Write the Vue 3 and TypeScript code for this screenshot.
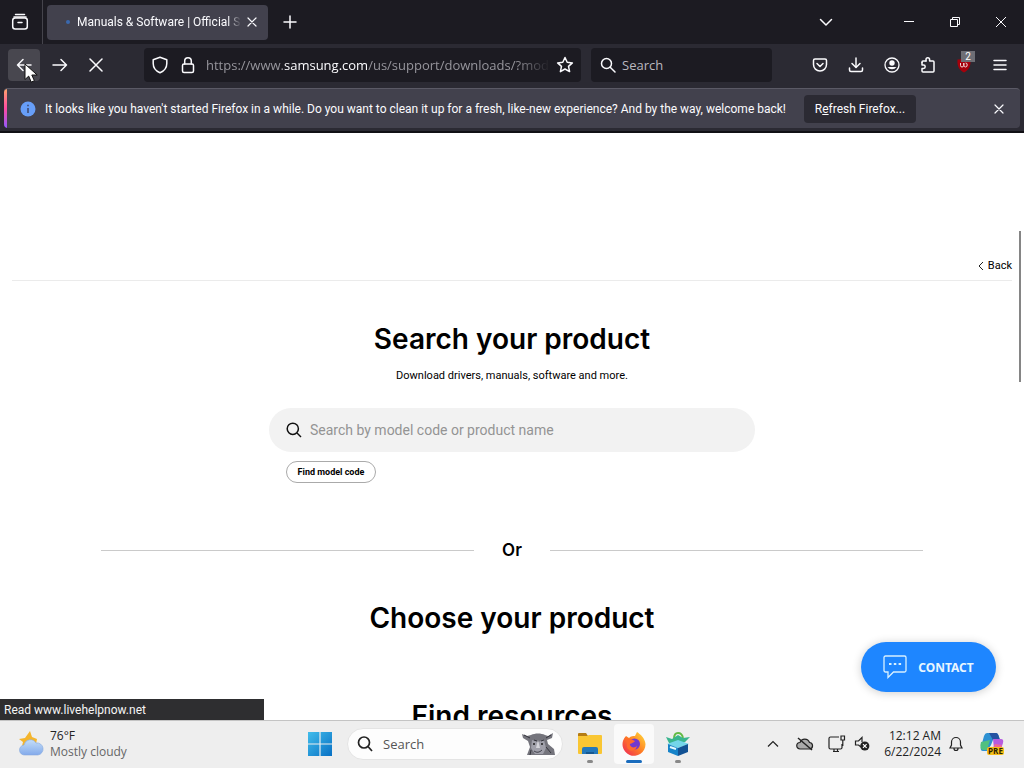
<script setup lang="ts">
import { ref } from 'vue'

const address = ref('')
const product = ref('')
const toolbarIcons: { label: string; paths: string[] }[] = [
  { label: 'Save to Pocket', paths: ['M3 2h10A1.500 1.500 0 0 1 14.500 3.500V7.500a6.500 6.500 0 0 1-13 0V3.500A1.500 1.500 0 0 1 3 2z', 'M5 6.500l3 3 3-3'] },
  { label: 'Downloads', paths: ['M8 1v9', 'M4 6.500L8 10.500l4-4', 'M1.500 11v2A1.500 1.500 0 0 0 3 14.500h10a1.500 1.500 0 0 0 1.500-1.500v-2'] },
]
</script>

<template>
  <div class="desktop">
    <section class="browser">
      <header class="tabs">
        <button class="view" aria-label="Firefox View">
          <svg width="18" height="18" viewBox="0 0 18 18" class="line"><path d="M4.500 1.500h9M3 4h12" /><rect x="1.700" y="5" width="14.600" height="11" rx="2.500" /><path d="M7 9.500h4" /></svg>
        </button>
        <div class="tab">
          <i class="spinner"></i>
          <span class="title">Manuals &amp; Software | Official S</span>
          <button aria-label="Close tab" class="bare">
            <svg width="10" height="10" viewBox="0 0 10 10" class="line thin"><path d="M1 1l8 8M9 1L1 9" /></svg>
          </button>
        </div>
        <button class="bare newtab" aria-label="New tab">
          <svg width="14" height="14" viewBox="0 0 14 14" class="line"><path d="M7 1v12M1 7h12" /></svg>
        </button>
        <span class="grow"></span>
        <button class="bare alltabs" aria-label="List all tabs">
          <svg width="14" height="14" viewBox="0 0 14 14" class="line"><path d="M1.500 4.500L7 10l5.500-5.500" /></svg>
        </button>
        <button class="bare win" aria-label="Minimize"><svg width="12" height="12" viewBox="0 0 12 12" class="line one"><path d="M1 5.500h10" /></svg></button>
        <button class="bare win" aria-label="Restore"><svg width="12" height="12" viewBox="0 0 12 12" class="line one"><path d="M1.500 3.500h7v7h-7zM3.500 3.500v-2h7v7h-2" /></svg></button>
        <button class="bare win" aria-label="Close"><svg width="12" height="12" viewBox="0 0 12 12" class="line one"><path d="M1 1l10 10M11 1L1 11" /></svg></button>
      </header>

      <nav class="toolbar">
        <button class="nav back" aria-label="Back">
          <svg width="16" height="16" viewBox="0 0 16 16" class="line"><path d="M15 8H1.500M7 2.500L1.500 8 7 13.500" /></svg>
          <svg class="cursor" width="15" height="21" viewBox="0 0 15 21"><path d="M1 1v15.500l3.700-3.400 2.500 6 3.200-1.400-2.600-5.700h5.400z" fill="#fff" stroke="#111" /></svg>
        </button>
        <button class="nav" aria-label="Forward"><svg width="16" height="16" viewBox="0 0 16 16" class="line"><path d="M1 8h13.500M9 2.500L14.500 8 9 13.500" /></svg></button>
        <button class="nav" aria-label="Stop"><svg width="14" height="14" viewBox="0 0 14 14" class="line"><path d="M1 1l12 12M13 1L1 13" /></svg></button>
        <div class="url">
          <svg width="16" height="18" viewBox="0 0 16 18" class="line"><path d="M8 1.200l6.800 2.500v3.800c0 4-2.600 7.500-6.800 9.200C3.800 15 1.200 11.500 1.200 7.500V3.700z" /></svg>
          <svg width="14" height="18" viewBox="0 0 14 18" class="line lock"><rect x="1.500" y="8" width="11" height="8.500" rx="1.500" /><path d="M3.700 8V5a3.300 3.300 0 0 1 6.600 0v3" /></svg>
          <a class="address" href="#">https://www.<b>samsung.com</b>/us/support/downloads/?mod</a>
          <button class="bare" aria-label="Bookmark this page"><svg width="18" height="18" viewBox="0 0 18 18" class="line"><path d="M9 1.500l2.200 4.800 5.200.6-3.900 3.500 1.100 5.200L9 13l-4.600 2.600 1.100-5.200L1.600 6.900l5.200-.6z" /></svg></button>
        </div>
        <label class="find">
          <svg width="16" height="16" viewBox="0 0 16 16" class="line"><circle cx="6.500" cy="6.500" r="5" /><path d="M10.200 10.200L15 15" /></svg>
          <input v-model="address" placeholder="Search" aria-label="Search the web" />
        </label>
        <div class="tools">
          <button v-for="t in toolbarIcons" :key="t.label" class="bare" :aria-label="t.label">
            <svg width="16" height="16" viewBox="0 0 16 16" class="line"><path v-for="p in t.paths" :key="p" :d="p" /></svg>
          </button>
          <button class="bare" aria-label="Account">
            <svg width="16" height="16" viewBox="0 0 16 16"><circle cx="8" cy="8" r="7" fill="none" stroke="#fbfbfe" stroke-width="1.300" /><circle cx="8" cy="6" r="2.700" fill="#fbfbfe" /><path d="M3.500 10h9a5.500 5.500 0 0 1-9 0z" fill="#fbfbfe" /></svg>
          </button>
          <button class="bare" aria-label="Extensions">
            <svg width="16" height="18" viewBox="0 0 16 18" class="line"><path d="M6 5V3.500a1.800 1.800 0 0 1 3.600 0V5H13a1 1 0 0 1 1 1v9a1 1 0 0 1-1 1H3a1 1 0 0 1-1-1v-2.500h1.500a1.700 1.700 0 0 0 0-3.400H2V6.500" /><path d="M2 6.500V6a1 1 0 0 1 1-1h3" /></svg>
          </button>
          <button class="bare ublock" aria-label="uBlock Origin">
            <svg width="16" height="16" viewBox="0 0 16 16"><path d="M8 .5C6 2 4 2.500 1.500 2.500 1 9 3 13 8 15.500 13 13 15 9 14.500 2.500 12 2.500 10 2 8 .5z" fill="#a5000b" /><path d="M4.500 6v2.500q0 1.500 1.500 1.500t1.800-1.500V6v2.500q.3 1.500 1.800 1.500t1.600-2-1.600-2" fill="none" stroke="#f3dada" /></svg>
            <span class="count">2</span>
          </button>
          <button class="bare" aria-label="Menu"><svg width="14" height="12" viewBox="0 0 14 12" class="line"><path d="M1 1.500h12M1 6h12M1 10.500h12" /></svg></button>
        </div>
      </nav>

      <div class="notice">
        <div class="bar">
          <svg width="16" height="16" viewBox="0 0 16 16"><circle cx="8" cy="8" r="7.500" fill="#679ef8" /><path d="M8 7v5M8 3.800v1.500" stroke="#3c456a" stroke-width="1.500" /></svg>
          <span class="message">It looks like you haven't started Firefox in a while. Do you want to clean it up for a fresh, like-new experience? And by the way, welcome back!</span>
          <button class="refresh">R<u>e</u>fresh Firefox...</button>
          <span class="grow"></span>
          <button class="bare" aria-label="Dismiss"><svg width="10" height="10" viewBox="0 0 10 10" class="line thin"><path d="M1 1l8 8M9 1L1 9" /></svg></button>
        </div>
      </div>

      <main class="page">
        <div class="crumb">
          <a href="#"><svg width="6" height="10" viewBox="0 0 6 10" fill="none" stroke="#222"><path d="M5 1L1 5l4 4" /></svg>Back</a>
        </div>
        <h1>Search your product</h1>
        <p class="sub">Download drivers, manuals, software and more.</p>
        <div class="search">
          <label class="field">
            <svg width="16" height="16" viewBox="0 0 16 16" fill="none" stroke="#111" stroke-width="1.500"><circle cx="6.800" cy="6.800" r="5.600" /><path d="M11 11l4 4" /></svg>
            <input v-model="product" placeholder="Search by model code or product name" aria-label="Model code or product name" />
          </label>
          <button class="pill">Find model code</button>
        </div>
        <div class="or"><span>Or</span></div>
        <h2 class="choose">Choose your product</h2>
        <h2 class="resources">Find resources</h2>
        <i class="scroll"></i>
        <button class="contact">
          <svg width="24" height="24" viewBox="0 0 24 24" fill="none" stroke="#d8f0ff" stroke-width="1.300"><path d="M2.500 1h19A1.500 1.500 0 0 1 23 2.500v13a1.500 1.500 0 0 1-1.500 1.500H10.500L5 22.500V17H2.500A1.500 1.500 0 0 1 1 15.500v-13A1.500 1.500 0 0 1 2.500 1z" /><path d="M6 9h2.500M10.800 9h2.500M15.600 9h2.500" stroke-width="2.200" /></svg>
          CONTACT
        </button>
        <div class="status">Read www.livehelpnow.net</div>
      </main>
    </section>

    <footer class="taskbar">
      <button class="bare weather">
        <svg width="28" height="26" viewBox="0 0 28 26"><defs><linearGradient id="cl" x2="0" y2="1"><stop stop-color="#c4def8" /><stop offset="1" stop-color="#83aaeb" /></linearGradient></defs><path d="M13 0l2 6 5 2-1 5-9 3-5-1 1-4-4-3 6-1z" fill="#f4b52c" /><path d="M8 24a5 5 0 0 1-1-10 6.500 6.500 0 0 1 12-2 6 6 0 0 1 2 12z" fill="url(#cl)" stroke="#86a9dd" stroke-width=".6" /></svg>
        <span><strong>76°F</strong><em>Mostly cloudy</em></span>
      </button>
      <div class="apps">
        <button class="app start" aria-label="Start">
          <svg width="24" height="24" viewBox="0 0 24 24"><defs><linearGradient id="wn" x2="1" y2="1"><stop stop-color="#42bdeb" /><stop offset="1" stop-color="#0870c4" /></linearGradient></defs><path d="M0 0h11.400v11.400H0zM12.600 0H24v11.400H12.600zM0 12.600h11.400V24H0zM12.600 12.600H24V24H12.600z" fill="url(#wn)" /></svg>
        </button>
        <button class="lookup">
          <svg width="16" height="16" viewBox="0 0 16 16" fill="none" stroke="#222" stroke-width="1.700"><circle cx="7" cy="6.500" r="5.500" /><path d="M11 10.500l4 4.500" /></svg>
          <span>Search</span>
          <svg class="rhino" width="34" height="24" viewBox="0 0 34 24"><path d="M1 2l5 2 4-1c4-2 10-2 14 0l3 1 5-3-1 5-5 2 1 4 6 5 1 6H6l3-8-2-6-5-3z" fill="#74747c" /><path d="M11 8l6 2 6-2 2 8-3 6h-8l-4-6z" fill="#a0a0aa" /><path d="M3 3l6 3M30 3l-5 3M13 8l3 1M20 9l3-1M25 15l5 6M10 18l-1 5" stroke="#35353d" fill="none" /><path d="M17 8l2 8h-4z" fill="#d4d4da" /><circle cx="13" cy="12" r="1" fill="#222" /><circle cx="21" cy="12" r="1" fill="#222" /><path d="M13 19q4 3 8-1" stroke="#40404a" fill="none" /></svg>
        </button>
        <button class="app" aria-label="File Explorer">
          <svg width="26" height="24" viewBox="0 0 26 24"><path d="M1 2q0-1 1-1h7l2 3h-10z" fill="#b57c14" /><path d="M1 4h9l2-1h12q1 0 1 1v17q0 1-1 1H2q-1 0-1-1z" fill="#f9c633" /><path d="M5 22v-5q0-2 2-2h12q2 0 2 2v5z" fill="#2378bb" /><path d="M9 22v-2h8v2" fill="#165891" /></svg><i class="dot"></i>
        </button>
        <button class="app active" aria-label="Firefox">
          <svg width="24" height="24" viewBox="0 0 24 24"><defs><linearGradient id="ff" x1="1" x2="0" y2="1"><stop stop-color="#ffe33c" /><stop offset=".5" stop-color="#ff7d24" /><stop offset="1" stop-color="#ed205c" /></linearGradient></defs><path d="M4 4l3 2c2-2 4-2 6-2l2-4c3 2 8 6 8.500 12A11.500 11.500 0 1 1 4 4z" fill="url(#ff)" /><circle cx="12.500" cy="12" r="5.500" fill="#7139ce" /><path d="M5 7c4-1 5 1 8 2-2 3-6 2-5 4 1 3 5 3 7 1-1 5-8 7-10 1z" fill="#ff6a2e" /></svg><i class="dot"></i>
        </button>
        <button class="app" aria-label="Store package">
          <svg width="26" height="26" viewBox="0 0 26 26"><path d="M9 8q0-6 4-6t5 5" stroke="#63bb45" stroke-width="2" fill="none" /><path d="M1 6l6 2 6-4 5 3 7-1-5 5-7 3-9-2z" fill="#39b58e" /><path d="M2 13l11-4 11 4-11 4z" fill="#74d6ea" /><path d="M3 13l10 4v8L3 21z" fill="#1683c9" /><path d="M13 17l10-4v8l-10 4z" fill="#125294" /><path d="M5 16l6 2" stroke="#e7fbff" stroke-width="2" /></svg><i class="dot"></i>
        </button>
      </div>
      <div class="tray">
        <button class="bare" aria-label="Hidden icons"><svg width="12" height="8" viewBox="0 0 12 8" class="ink"><path d="M1 6.500l5-5 5 5" /></svg></button>
        <button class="bare cloud" aria-label="OneDrive"><svg width="18" height="14" viewBox="0 0 18 14" class="ink"><path d="M4 12a3.200 3.200 0 0 1 0-6.500 5 5 0 0 1 9.500 0A3.300 3.300 0 0 1 14 12z" fill="#aaa" /><path d="M2 1l14 12" stroke-width="1.500" /></svg></button>
        <button class="bare" aria-label="Network"><svg width="18" height="18" viewBox="0 0 18 18" class="ink"><path d="M11 2H2.500Q1 2 1 3.500v9Q1 14 2.500 14h10q1.500 0 1.500-1.500V9M5 16.500h6M6 14v2.500M9.500 14v2.500M13 1h3.500v4H13zM14.800 5v6" /></svg></button>
        <button class="bare" aria-label="Volume"><svg width="16" height="16" viewBox="0 0 16 16" class="ink"><path d="M7 11L4.500 9H1.500V5h3L8 1.500V6" /><circle cx="10.800" cy="10" r="4.600" fill="#222" stroke="none" /><path d="M9 8.200l3.600 3.600M12.600 8.200L9 11.800" stroke="#fff" /></svg></button>
        <time>12:12 AM<br />6/22/2024</time>
        <button class="bare" aria-label="Notifications"><svg width="14" height="16" viewBox="0 0 14 16" class="ink"><path d="M1 12h12l-1.500-3V6a4.500 4.500 0 0 0-9 0v3zM5 12.500a2 2 0 0 0 4 0" /></svg></button>
        <button class="bare copilot" aria-label="Copilot">
          <svg width="26" height="26" viewBox="0 0 26 26"><path d="M8 2h9q2 0 3 4l1 3h-7l-2 5-4 6H4q-3 0-2-4L5 5q1-3 3-3z" fill="#2d91d2" /><path d="M10 2h7q2 0 3 4l1 3h-7z" fill="#2553a2" /><path d="M2 11l9-2-3 10H4q-4-1-2-8z" fill="#51c080" /><path d="M14 8h8q3 0 2 4l-3 9h-9l3-3z" fill="#b65de0" /><path d="M16 13l7 1-2 7h-9z" fill="#f06799" /><rect x="8" y="16" width="17" height="8" rx="2" fill="#f7bf19" /><text x="16.500" y="22.700" text-anchor="middle">PRE</text></svg>
        </button>
      </div>
    </footer>
  </div>
</template>

<style>
html, body { margin: 0; overflow: hidden; }
</style>

<style scoped>
* { box-sizing: border-box; }
.desktop { height: 100vh; display: flex; flex-direction: column; font-family: Roboto, "Noto Sans", sans-serif; font-size: 12px; background: #fff; color: #fbfbfe; }
button { font: inherit; color: inherit; border: 0; padding: 0; background: none; display: flex; align-items: center; justify-content: center; white-space: nowrap; }
input { font: inherit; color: inherit; border: 0; padding: 0; background: none; outline: 0; min-width: 0; flex: 1; }
svg { flex: none; display: block; }
a { color: inherit; text-decoration: none; }
.line { fill: none; stroke: #fbfbfe; stroke-width: 1.5; stroke-linecap: round; stroke-linejoin: round; }
.thin { stroke-width: 1.2; }
.one { stroke-width: 1; stroke-linecap: butt; stroke-linejoin: miter; }
.grow { flex: 1; }
.browser { flex: 1; min-height: 0; display: flex; flex-direction: column; }
.tabs { height: 44px; background: #1c1b22; display: flex; align-items: center; flex: none; }
.view { width: 43px; height: 44px; border-right: 1px solid #45444c; padding-right: 2px; }
.tab { width: 221px; height: 35px; margin-left: 4px; border-radius: 4px; background: #42414d; display: flex; align-items: center; padding: 0 11px 0 19px; }
.spinner { width: 4px; height: 4px; border-radius: 2px; background: #3a68ae; margin-right: 7px; flex: none; }
.title { flex: 1; overflow: hidden; white-space: nowrap; margin-right: 6px; mask-image: linear-gradient(90deg, #000 92%, transparent); }
.newtab { width: 44px; height: 40px; }
.alltabs { width: 40px; height: 40px; margin-right: 40px; }
.win { width: 46px; height: 44px; }
.toolbar { height: 44px; flex: none; background: #2b2a33; display: flex; align-items: center; padding: 0 6px 3px 8px; }
.nav { width: 32px; height: 32px; border-radius: 4px; margin-right: 4px; }
.back { background: #48474f; position: relative; }
.cursor { position: absolute; left: 16px; top: 14px; }
.url { height: 34px; flex: 1; min-width: 0; margin-left: 28px; background: #1c1b22; border-radius: 4px; display: flex; align-items: center; padding: 0 7px 0 8px; font: 13px "Open Sans", sans-serif; }
.lock { margin: 0 11px 0 13px; }
.address { flex: 1; overflow: hidden; white-space: nowrap; color: #96959c; margin-right: 6px; mask-image: linear-gradient(90deg, #000 90%, transparent); }
.address b { font-weight: 400; color: #fbfbfe; }
.find { width: 181px; height: 34px; margin: 0 30px 0 10px; background: #1c1b22; border-radius: 4px; display: flex; align-items: center; gap: 6px; padding: 0 9px; font: 13px "Open Sans", sans-serif; }
.find input::placeholder { color: #b9b8bf; opacity: 1; }
.tools { display: flex; }
.tools button { width: 36px; height: 32px; }
.ublock { position: relative; }
.count { position: absolute; left: 15px; top: 2px; width: 14px; height: 11px; background: #6e6e75; color: #fff; font-size: 10px; line-height: 11px; }
.notice { height: 45px; flex: none; background: #2b2a33; border-bottom: 2px solid #111015; padding: 0 4px 3px; }
.bar { height: 40px; display: flex; align-items: center; background: linear-gradient(#ffa36c, #ff4aa2 50%, #9059ff) left / 3px 100% no-repeat #42414d; border-top: 1px solid #5b5a66; border-radius: 4px; padding: 0 16px; }
.message { margin-left: 9px; white-space: nowrap; }
.refresh { margin-left: 18px; height: 28px; width: 112px; background: #2b2a33; border-radius: 4px; }
.page { flex: 1; min-height: 0; position: relative; overflow: hidden; background: #fff; color: #000; display: flex; flex-direction: column; align-items: center; }
.crumb { align-self: stretch; margin: 0 12px; padding-top: 123px; height: 148px; border-bottom: 1px solid #ebebeb; display: flex; justify-content: flex-end; flex: none; font-size: 11px; line-height: 20px; }
.crumb a { display: flex; align-items: center; gap: 4px; height: 20px; }
h1, h2 { font-family: Inter, sans-serif; font-weight: 600; font-size: 28px; line-height: 36px; margin: 0; white-space: nowrap; flex: none; }
h1 { margin-top: 40px; }
.sub { margin: 11px 0 24px; font-size: 11px; line-height: 16px; }
.search { width: 486px; max-width: 100%; }
.field { height: 44px; border-radius: 22px; background: #f2f2f2; display: flex; align-items: center; gap: 8px; padding: 0 17px; font-size: 14px; }
.field input::placeholder { color: #949494; opacity: 1; }
.pill { margin: 9px 0 0 17px; width: 90px; height: 22px; border: 1px solid #aaa; border-radius: 11px; font-size: 9px; font-weight: 700; }
.or { width: 822px; max-width: 90%; display: flex; align-items: center; gap: 28px; margin: 55px 0 38px; font: 600 17px/24px Inter, sans-serif; }
.or::before, .or::after { content: ""; flex: 1; height: 1px; background: #cacaca; }
.resources { margin-top: 62px; }
.scroll { position: absolute; right: 3px; top: 98px; width: 2px; height: 151px; background: #858585; }
.contact { position: absolute; right: 28px; bottom: 28px; width: 135px; height: 50px; border-radius: 25px; background: #1e86ff; color: #e8f6ff; gap: 11px; font: 700 12px "Noto Sans", sans-serif; box-shadow: 0 1px 10px rgba(0, 0, 0, .2); }
.status { position: absolute; left: 0; bottom: 0; width: 264px; height: 21px; padding-left: 4px; background: #2e2e30; color: #f5f5f5; line-height: 22px; }
.taskbar { height: 48px; flex: none; display: grid; grid-template-columns: 1fr auto 1fr; background: #eee; border-top: 1px solid #c4c4c4; padding-bottom: 1px; color: #222; font-family: "Open Sans", sans-serif; }
.weather { justify-self: start; padding-left: 17px; gap: 5px; text-align: left; line-height: 16px; }
.weather strong, .weather em { display: block; font-weight: 400; font-style: normal; }
.weather em { color: #666; }
.apps { display: flex; align-items: center; margin-right: 26px; }
.app { width: 40px; height: 40px; margin: 0 2px; border-radius: 4px; position: relative; }
.app.active { background: #fafafa; }
.lookup { width: 216px; height: 32px; border-radius: 16px; background: #fdfdfd; border: 1px solid #e4e4e4; margin: 0 5px; padding: 0 7px 0 9px; gap: 10px; font-size: 13px; color: #555; }
.rhino { margin-left: auto; }
.dot { position: absolute; bottom: 1px; left: 17px; width: 6px; height: 3px; border-radius: 2px; background: #888; }
.active .dot { width: 16px; left: 12px; background: #1a6cbd; }
.tray { display: flex; align-items: center; justify-content: flex-end; padding-right: 19px; gap: 8px; }
.cloud { margin: 0 6px 0 9px; }
.ink { fill: none; stroke: #222; stroke-width: 1.2; }
.tray time { text-align: right; line-height: 16px; margin-left: 6px; }
.copilot { margin-left: 8px; }
.copilot text { font: 700 8px "Open Sans", sans-serif; fill: #2b2200; }
</style>
